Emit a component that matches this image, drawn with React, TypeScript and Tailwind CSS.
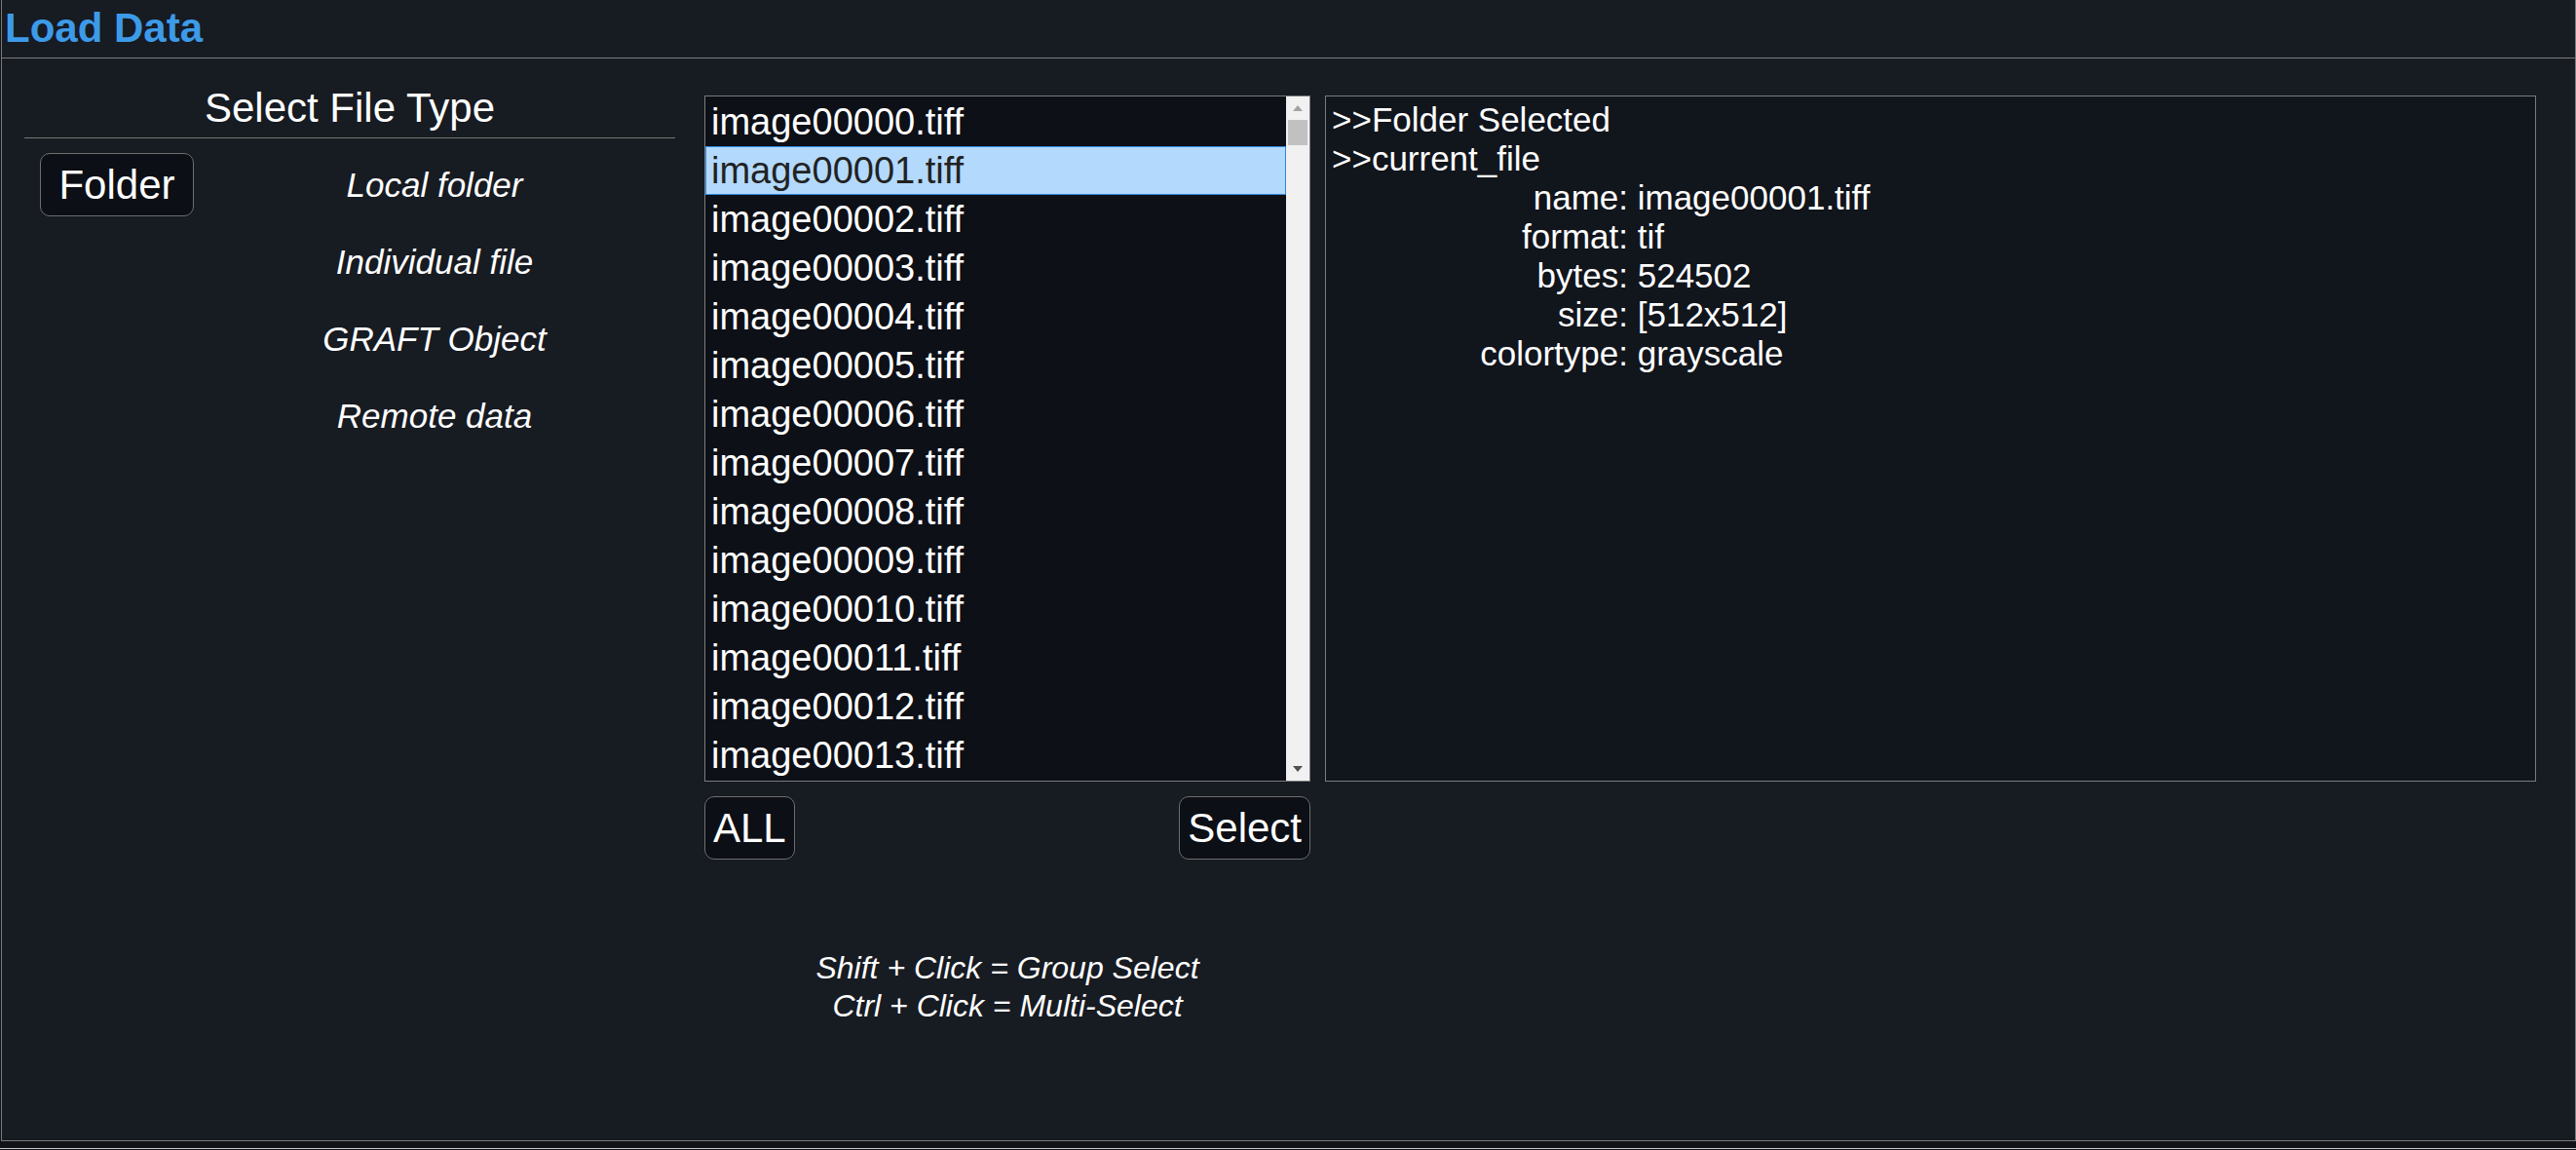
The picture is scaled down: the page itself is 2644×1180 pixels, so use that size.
import React from 'react';

const files = Array.from({ length: 14 }, (_, i) => `image${String(i).padStart(5, '0')}.tiff`);

const fileTypes = ['Local folder', 'Individual file', 'GRAFT Object', 'Remote data'];

const fileInfo = [
  ['name:', 'image00001.tiff'],
  ['format:', 'tif'],
  ['bytes:', '524502'],
  ['size:', '[512x512]'],
  ['colortype:', 'grayscale'],
];

const Btn: React.FC<{ children: React.ReactNode; className?: string }> = ({ children, className = '' }) => (
  <button
    className={`h-[65px] flex items-center justify-center rounded-[10px] border border-[#6e6e6e] bg-[#0c0f15] text-white text-[42px] leading-[48px] ${className}`}
  >
    {children}
  </button>
);

export default function App() {
  return (
    <div className="w-[2644px] h-[1180px] overflow-hidden bg-[#111318] font-['Liberation_Sans',Arial,sans-serif] text-white">
      <div className="ml-[1px] w-[2643px] h-[1171px] flex flex-col border-l border-r border-b border-[#7b7b7b] bg-[#171b22]">
        {/* Header */}
        <div className="h-[60px] shrink-0 border-b border-[#7b7b7b] pl-[3px]">
          <span className="text-[42px] leading-[57px] font-bold text-[#3d9ae8]">Load Data</span>
        </div>

        {/* Body */}
        <div className="flex items-start pl-[23px]">
          {/* File type column */}
          <div className="w-[668px] pt-[26px]">
            <div className="text-center text-[42px] leading-[50px] pb-[5px] border-b border-[#777]">Select File Type</div>
            <div className="mt-[8px] grid grid-cols-[174px_1fr]">
              {fileTypes.map((t, i) => (
                <React.Fragment key={t}>
                  <div className="h-[79px] flex items-center">
                    {i === 0 && <Btn className="ml-[16px] w-[158px]">Folder</Btn>}
                  </div>
                  <div className="h-[79px] flex items-center justify-center italic text-[35px] leading-[40px]">{t}</div>
                </React.Fragment>
              ))}
            </div>
          </div>

          {/* File list column */}
          <div className="ml-[30px] mt-[38px] w-[622px] flex flex-col">
            <div className="h-[704px] flex border border-[#7b7b7b] bg-[#0d1017]">
              <div className="flex-1 py-[1px] overflow-hidden">
                {files.map((f, i) =>
                  i === 1 ? (
                    <div
                      key={f}
                      className="h-[50px] pl-[5px] text-[38px] leading-[48px] bg-[#b3d9fd] border border-[#2b8ae2] text-[#222]"
                    >
                      {f}
                    </div>
                  ) : (
                    <div key={f} className="h-[50px] pl-[6px] text-[38px] leading-[50px]">
                      {f}
                    </div>
                  )
                )}
              </div>
              <div className="w-[24px] flex flex-col bg-[#f1f1f1]">
                <div className="h-[24px] flex items-center justify-center">
                  <svg width="10" height="6" viewBox="0 0 10 6">
                    <path d="M5 0 L10 6 L0 6 Z" fill="#a3a3a3" />
                  </svg>
                </div>
                <div className="mx-[2px] h-[26px] bg-[#c1c1c1]" />
                <div className="flex-1" />
                <div className="h-[24px] flex items-center justify-center">
                  <svg width="10" height="6" viewBox="0 0 10 6">
                    <path d="M0 0 L10 0 L5 6 Z" fill="#505050" />
                  </svg>
                </div>
              </div>
            </div>
            <div className="mt-[15px] flex justify-between">
              <Btn className="px-[8px]">ALL</Btn>
              <Btn className="px-[8px]">Select</Btn>
            </div>
            <div className="mt-[92px] text-center italic text-[32px] leading-[39px]">
              <div>Shift + Click = Group Select</div>
              <div>Ctrl + Click = Multi-Select</div>
            </div>
          </div>

          {/* Info panel */}
          <div className="ml-[15px] mt-[38px] w-[1243px] h-[704px] border border-[#7b7b7b] bg-[#11151c] pt-[4px] pl-[6px] text-[35px] leading-[40px]">
            <div>&gt;&gt;Folder Selected</div>
            <div>&gt;&gt;current_file</div>
            <div className="grid grid-cols-[304px_auto] justify-start">
              {fileInfo.map(([k, v]) => (
                <React.Fragment key={k}>
                  <div className="text-right">{k}</div>
                  <div className="whitespace-pre">{' ' + v}</div>
                </React.Fragment>
              ))}
            </div>
          </div>
        </div>
      </div>
      <div className="mt-[7px] h-[1px] bg-[#c8c8c8]" />
    </div>
  );
}
